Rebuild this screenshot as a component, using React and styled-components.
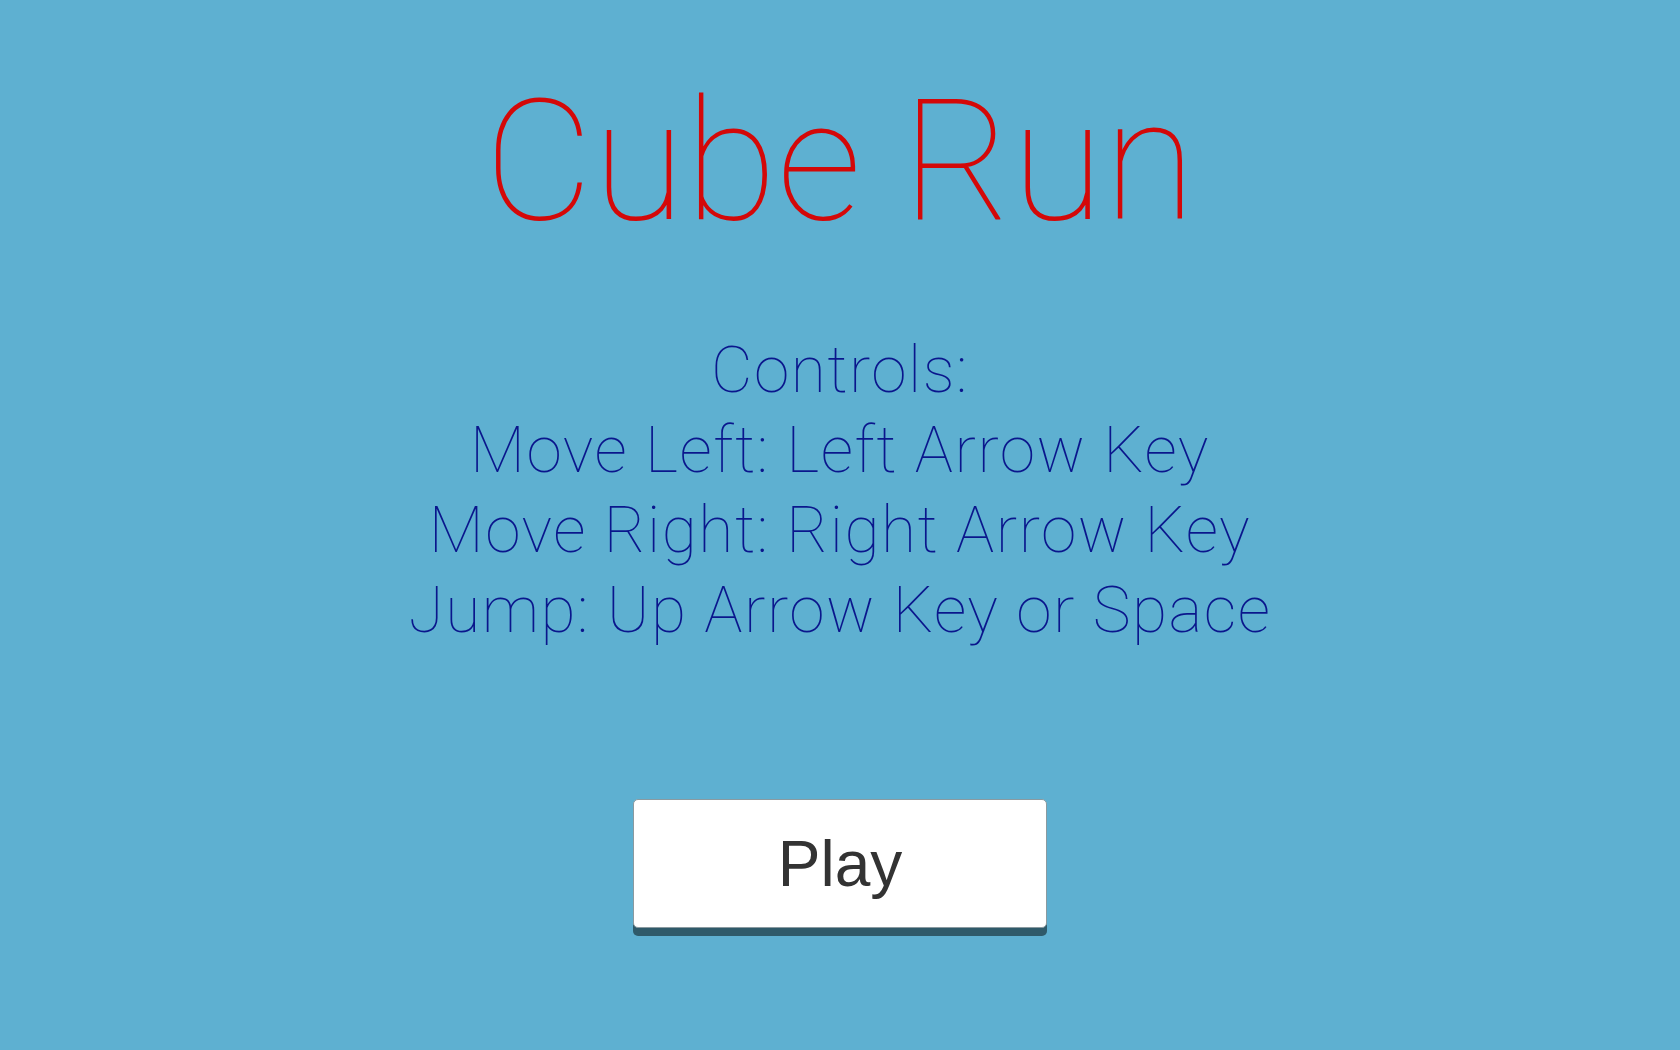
import styled, { createGlobalStyle } from 'styled-components'

const GlobalStyle = createGlobalStyle`
	html, body {
		margin: 0;
		padding: 0;
		background: #5eb0d1;
	}
	body {
		font-family: Roboto, 'Liberation Sans', sans-serif;
	}
`

const Screen = styled.main`
	min-height: 1050px;
	display: flex;
	flex-direction: column;
	align-items: center;
	padding-top: 78px;
	box-sizing: border-box;
`
const Title = styled.h1`
	margin: 0;
	font-family: Roboto, sans-serif;
	font-weight: 100;
	font-size: 168px;
	line-height: 1;
	color: #d40808;
`
const Controls = styled.div`
	margin-top: 85px;
	font-family: Roboto, sans-serif;
	font-weight: 100;
	font-size: 64px;
	line-height: 80px;
	letter-spacing: 1.5px;
	color: #0a168c;
	text-align: center;
`
const PlayButton = styled.button`
	margin-top: 148px;
	width: 414px;
	height: 129px;
	background: #fff;
	border: 1px solid #8a9aa0;
	border-radius: 5px;
	box-shadow: 0 8px 0 #2f5a6a;
	font-family: 'Liberation Sans', Arial, sans-serif;
	font-size: 64px;
	color: #333;
	cursor: pointer;
`

const lines = [
	'Controls:',
	'Move Left: Left Arrow Key',
	'Move Right: Right Arrow Key',
	'Jump: Up Arrow Key or Space',
]

const App = () => (
	<>
		<GlobalStyle />
		<Screen>
			<Title>Cube Run</Title>
			<Controls>
				{lines.map((line) => (
					<div key={line}>{line}</div>
				))}
			</Controls>
			<PlayButton>Play</PlayButton>
		</Screen>
	</>
)

export default App
